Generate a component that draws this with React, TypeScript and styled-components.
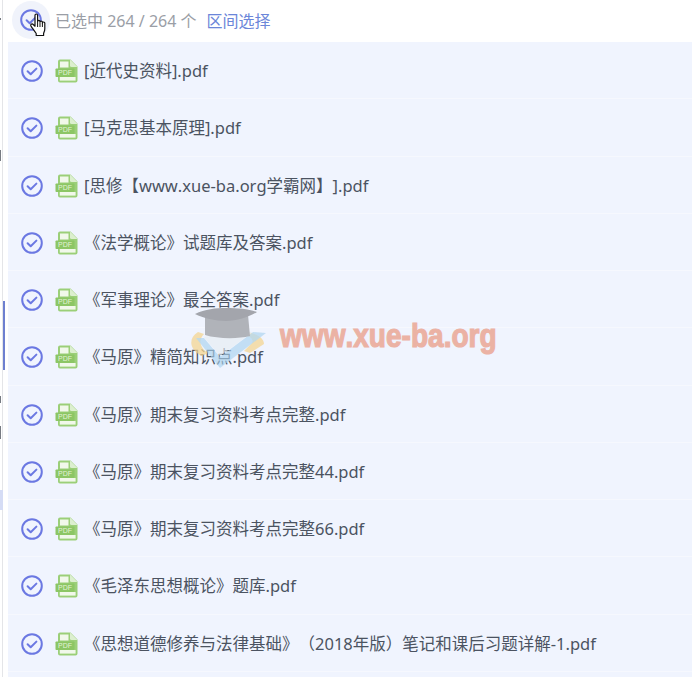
import React from "react";
import styled, { createGlobalStyle } from "styled-components";

const files = [
  "[近代史资料].pdf",
  "[马克思基本原理].pdf",
  "[思修【www.xue-ba.org学霸网】].pdf",
  "《法学概论》试题库及答案.pdf",
  "《军事理论》最全答案.pdf",
  "《马原》精简知识点.pdf",
  "《马原》期末复习资料考点完整.pdf",
  "《马原》期末复习资料考点完整44.pdf",
  "《马原》期末复习资料考点完整66.pdf",
  "《毛泽东思想概论》题库.pdf",
  "《思想道德修养与法律基础》（2018年版）笔记和课后习题详解-1.pdf",
];

const CheckIcon = () => (
  <svg width="22" height="22" viewBox="0 0 22 22" fill="none">
    <circle cx="11" cy="11" r="9.8" stroke="#6b78e2" strokeWidth="2" />
    <path d="M6.6 11.300l3.100 3 5.700-5.700" stroke="#6b78e2" strokeWidth="2" strokeLinecap="round" strokeLinejoin="round" />
  </svg>
);

const PdfIcon = () => (
  <svg width="23" height="24" viewBox="0 0 23 24">
    <path d="M5 .5h10.500L22.500 7.500V21.500a2 2 0 0 1-2 2H5a2 2 0 0 1-2-2V2.500a2 2 0 0 1 2-2z" fill="#9bcf78" />
    <path d="M15 .5v6a1.500 1.500 0 0 0 1.500 1.500h6" fill="#dcefcf" />
    <rect x="5" y="2.500" width="8.500" height="6" fill="#f1f8ea" />
    <rect x="4.800" y="18" width="15.800" height="3.600" fill="#f1f8ea" />
    <rect x="0.500" y="9.500" width="19" height="8.500" rx="0.800" fill="#8cc665" />
    <text x="10" y="16.200" fontSize="7" fontFamily="Liberation Sans, sans-serif" textAnchor="middle" fill="#e3f2d6">PDF</text>
  </svg>
);

const HandCursor = () => (
  <svg width="20" height="25" viewBox="0 0 20 25">
    <path
      d="M6 2.200c0-1.600 2.600-1.600 2.600 0v6.200c0-1.400 2.400-1.400 2.400 0v.7c0-1.300 2.400-1.300 2.400 0v.8c0-1.200 2.400-1.200 2.400.2v5.700c0 2-.6 3-1.200 4.500v2.200H7.200v-2C6 18.700 4 16 2 13.200c-1-1.500.8-3 2.200-1.700L6 13.200z"
      fill="#fff"
      stroke="#111"
      strokeWidth="1.200"
      strokeLinejoin="round"
    />
    <path d="M8.600 9v5M11 9.500v4.500M13.400 10v4" stroke="#111" strokeWidth="1" />
  </svg>
);

const GradCap = () => (
  <svg width="78" height="64" viewBox="0 0 78 64">
    <path d="M8 26C-2 32 -1 44 12 50l6-3C10 42 8 34 14 28z" fill="#f5d58e" opacity="0.85" />
    <path d="M56 26c10 1 18 6 18 12l-14 9-6-2 8-8c2-4-2-7-8-8z" fill="#f5d58e" opacity="0.85" />
    <path d="M6 32l24 30 46-35-13-1-33 25-16-19z" fill="#a9d3ef" opacity="0.75" />
    <path d="M14 31l16 19 33-24-20-1z" fill="#e6edf2" opacity="0.75" />
    <path d="M15 9h43l2 21c-12 3-32 3-45-1z" fill="#a6a8ae" />
    <path d="M5 8C15 3 26 2 36 2c12 0 23 1 31 4-8 5-20 9-31 9C25 15 13 12 5 8z" fill="#96989e" />
  </svg>
);

const App: React.FC = () => {
  return (
    <>
      <GlobalStyle />
      <Page>
        <SideEdge>
          <EdgeMark $top={18} $height={2} />
          <EdgeMark $top={150} $height={11} />
          <EdgeMark $top={396} $height={7} />
          <EdgeMark $top={426} $height={13} />
          <ActiveBar />
          <TintBar />
        </SideEdge>
        <Main>
          <Header>
            <HeaderCheck>
              <CheckIcon />
              <CursorWrap>
                <HandCursor />
              </CursorWrap>
            </HeaderCheck>
            <Count>已选中 264 / 264 个</Count>
            <RangeLink>区间选择</RangeLink>
          </Header>
          <List>
            {files.map((name) => (
              <Row key={name}>
                <RowCheck>
                  <CheckIcon />
                </RowCheck>
                <FileIcon>
                  <PdfIcon />
                </FileIcon>
                <FileName>{name}</FileName>
              </Row>
            ))}
          </List>
        </Main>
        <Watermark>
          <GradCap />
          <WatermarkText>www.xue-ba.org</WatermarkText>
        </Watermark>
      </Page>
    </>
  );
};

const GlobalStyle = createGlobalStyle`
  html, body {
    margin: 0;
    padding: 0;
    background: #fff;
  }
  body {
    font-family: "Noto Sans", "Noto Sans CJK SC", sans-serif;
    font-kerning: none;
    text-spacing-trim: space-all;
  }
`;

const Page = styled.div`
  position: relative;
  display: flex;
  width: 692px;
  height: 677px;
  overflow: hidden;
  background: #fff;
`;

const SideEdge = styled.div`
  position: relative;
  flex: none;
  width: 8px;
  box-sizing: border-box;
  background: linear-gradient(to right, #fff 2px, #e4e5e8 2px, #e4e5e8 3px, #fff 3px);
`;

const EdgeMark = styled.div<{ $top: number; $height: number }>`
  position: absolute;
  left: 0;
  top: ${(p) => p.$top}px;
  width: 1px;
  height: ${(p) => p.$height}px;
  background: #777b82;
`;

const ActiveBar = styled.div`
  position: absolute;
  left: 3px;
  top: 301px;
  width: 2px;
  height: 69px;
  background: #6d7fd0;
`;

const TintBar = styled.div`
  position: absolute;
  left: 0;
  top: 490px;
  width: 3px;
  height: 20px;
  background: #d5dcf5;
`;

const Main = styled.div`
  display: flex;
  flex-direction: column;
  flex: 1;
  min-width: 0;
`;

const Header = styled.div`
  display: flex;
  flex: none;
  align-items: center;
  height: 42px;
  padding: 0 0 3px 4px;
  box-sizing: border-box;
`;

const HeaderCheck = styled.div`
  position: relative;
  display: flex;
  align-items: center;
  justify-content: center;
  flex: none;
  width: 38px;
  height: 38px;
  margin-right: 5px;
  border-radius: 50%;
  background: #f0f3fb;
`;

const CursorWrap = styled.div`
  position: absolute;
  left: 17px;
  top: 12px;
  line-height: 0;
`;

const Count = styled.span`
  font-size: 16px;
  color: #9a9ea6;
`;

const RangeLink = styled.span`
  margin-left: 10px;
  font-size: 16px;
  color: #6b86d9;
`;

const List = styled.div`
  display: flex;
  flex-direction: column;
  flex: 1;
  background: #f0f4fe;
`;

const Row = styled.div`
  display: flex;
  flex: none;
  align-items: center;
  height: 57.250px;
  box-sizing: border-box;
  padding-left: 13px;
  border-bottom: 1px solid #f6f8fe;
`;

const RowCheck = styled.div`
  display: flex;
  flex: none;
  margin: 2px 12px 0 0;
`;

const FileIcon = styled.div`
  display: flex;
  flex: none;
  margin: 2px 6px 0 0;
`;

const FileName = styled.span`
  font-size: 16.500px;
  color: #4b5361;
  white-space: nowrap;
`;

const Watermark = styled.div`
  position: absolute;
  left: 190px;
  top: 306px;
  display: flex;
  align-items: center;
  opacity: 0.85;
  pointer-events: none;
`;

const WatermarkText = styled.span`
  display: inline-block;
  margin-left: 12px;
  margin-top: -6px;
  font-family: "Liberation Sans", sans-serif;
  font-size: 33px;
  font-weight: 700;
  line-height: 1;
  color: #eba795;
  -webkit-text-stroke: 1.200px #eba795;
  white-space: nowrap;
  transform: scaleX(0.85);
  transform-origin: left center;
`;

export default App;
